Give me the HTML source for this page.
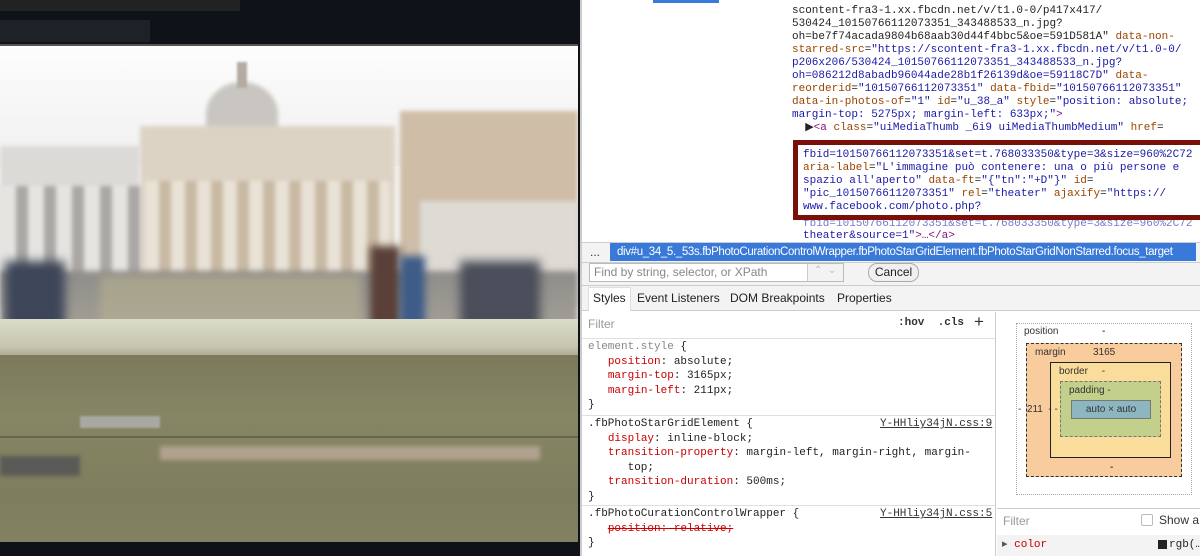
<!DOCTYPE html>
<html><head><meta charset="utf-8"><style>
*{margin:0;padding:0;box-sizing:border-box}
body{width:1200px;height:556px;overflow:hidden;position:relative;background:#fff;font-family:"Liberation Sans",sans-serif}
.a{position:absolute}
.m{font-family:"Liberation Mono",monospace;font-size:11px;white-space:pre;line-height:13px}
.n{color:#994500}.v{color:#1a1aa6}.t{color:#881280}
.s{font-family:"Liberation Mono",monospace;font-size:11px;white-space:pre;line-height:14.5px;color:#222}
.p{color:#c80000}
.sep{position:absolute;left:582px;width:413px;height:1px;background:#e0e0e0}
.tab{position:absolute;top:291px;font-size:12px;color:#222;white-space:nowrap}
</style></head><body>
<!-- left photo -->
<div class="a" style="left:0;top:0;width:580px;height:556px;background:#0f1319"></div>
<div class="a" style="left:0;top:0;width:240px;height:11px;background:#222"></div>
<div class="a" style="left:0;top:20px;width:150px;height:22px;background:#1e2126"></div>
<div class="a" style="left:0;top:44px;width:578px;height:2px;background:#555"></div>
<div class="a" style="left:0;top:46px;width:578px;height:496px;overflow:hidden;background:#f8f8f8">
  <div class="a" style="left:0;top:0;width:578px;height:120px;background:linear-gradient(#fdfdfd,#f0f0f0)"></div>
  <div class="a" style="left:206px;top:36px;width:72px;height:64px;border-radius:50% 50% 0 0;background:#c9c6c2;filter:blur(2px)"></div>
  <div class="a" style="left:237px;top:16px;width:10px;height:26px;background:#b4aca2;filter:blur(1px)"></div>
  <div class="a" style="left:140px;top:80px;width:255px;height:170px;background:#ddd3c4;filter:blur(2px)"></div>
  <div class="a" style="left:145px;top:135px;width:245px;height:100px;background:repeating-linear-gradient(90deg,#e9e2d6 0 14px,#c8b9a3 14px 26px);filter:blur(2px)"></div>
  <div class="a" style="left:0;top:100px;width:140px;height:160px;background:#dcdad7;filter:blur(2px)"></div>
  <div class="a" style="left:0;top:140px;width:140px;height:100px;background:repeating-linear-gradient(90deg,#e6e4e1 0 16px,#aaa7a4 16px 28px);filter:blur(2px)"></div>
  <div class="a" style="left:400px;top:65px;width:178px;height:195px;background:#cfbda8;filter:blur(2px)"></div>
  <div class="a" style="left:420px;top:155px;width:158px;height:100px;background:#dedad4;filter:blur(2px)"></div>
  <div class="a" style="left:0;top:225px;width:578px;height:90px;background:linear-gradient(#8f8d89,#aeaaa0);filter:blur(3px)"></div>
  <div class="a" style="left:100px;top:230px;width:260px;height:80px;background:#b5b08f;opacity:.6;filter:blur(4px)"></div>
  <div class="a" style="left:370px;top:200px;width:30px;height:110px;background:#5a4038;filter:blur(4px)"></div>
  <div class="a" style="left:400px;top:210px;width:25px;height:100px;background:#3d5c88;filter:blur(4px)"></div>
  <div class="a" style="left:5px;top:215px;width:60px;height:95px;background:#3d4658;filter:blur(5px)"></div>
  <div class="a" style="left:460px;top:215px;width:80px;height:95px;background:#4a4e5a;filter:blur(5px)"></div>
  <div class="a" style="left:0;top:273px;width:578px;height:40px;background:linear-gradient(#dcdccb,#c6c4ae 70%,#a69c87)"></div>
  <div class="a" style="left:0;top:309px;width:578px;height:200px;background:linear-gradient(#7b7a5c,#868664 30%,#7e7e5e 70%,#838363)"></div>
  <div class="a" style="left:80px;top:370px;width:80px;height:12px;background:#a8a8a2;filter:blur(1px)"></div>
  <div class="a" style="left:160px;top:400px;width:380px;height:14px;background:#b0a28e;filter:blur(2px)"></div>
  <div class="a" style="left:0;top:390px;width:578px;height:2px;background:#4a4533;opacity:.5"></div>
  <div class="a" style="left:0;top:410px;width:80px;height:20px;background:#5a5a58;filter:blur(2px)"></div>
</div>
<!-- devtools -->
<div class="a" style="left:580px;top:0;width:620px;height:556px;background:#fff;border-left:2px solid #ccc"></div>
<div class="a" style="left:653px;top:0;width:66px;height:3px;background:#3879d9"></div>
<div class="a m" style="left:792px;top:5px;color:#222">scontent-fra3-1.xx.fbcdn.net/v/t1.0-0/p417x417/
530424_10150766112073351_343488533_n.jpg?
oh=be7f74acada9804b68aab30d44f4bbc5&amp;oe=591D581A" <span class="n">data-non-</span>
<span class="n">starred-src</span>=<span class="v">"https://scontent-fra3-1.xx.fbcdn.net/v/t1.0-0/</span>
<span class="v">p206x206/530424_10150766112073351_343488533_n.jpg?</span>
<span class="v">oh=086212d8abadb96044ade28b1f26139d&amp;oe=59118C7D"</span> <span class="n">data-</span>
<span class="n">reorderid</span>=<span class="v">"10150766112073351"</span> <span class="n">data-fbid</span>=<span class="v">"10150766112073351"</span>
<span class="n">data-in-photos-of</span>=<span class="v">"1"</span> <span class="n">id</span>=<span class="v">"u_38_a"</span> <span class="n">style</span>=<span class="v">"position: absolute;</span>
<span class="v">margin-top: 5275px; margin-left: 633px;"</span><span class="t">&gt;</span>
  ▶<span class="t">&lt;a</span> <span class="n">class</span>=<span class="v">"uiMediaThumb _6i9 uiMediaThumbMedium"</span> <span class="n">href</span>=
</div>
<div class="a m" style="left:803px;top:218px;color:#1a1aa6;opacity:.6">fbid=10150766112073351&amp;set=t.768033350&amp;type=3&amp;size=960%2C72</div>
<div class="a m" style="left:803px;top:230px"><span class="v">theater&amp;source=1"</span><span class="t">&gt;…&lt;/a&gt;</span></div>
<div class="a" style="left:793px;top:140px;width:407px;height:80px;border:5px solid #7a0f0a;border-right:none;background:#fff"></div>
<div class="a m" style="left:803px;top:149px;color:#222"><span class="v">fbid=10150766112073351&amp;set=t.768033350&amp;type=3&amp;size=960%2C72</span>
<span class="n">aria-label</span>=<span class="v">"L'immagine può contenere: una o più persone e</span>
<span class="v">spazio all'aperto"</span> <span class="n">data-ft</span>=<span class="v">"{"tn":"+D"}"</span> <span class="n">id</span>=
<span class="v">"pic_10150766112073351"</span> <span class="n">rel</span>=<span class="v">"theater"</span> <span class="n">ajaxify</span>=<span class="v">"https://</span>
<span class="v">www.facebook.com/photo.php?</span></div>
<!-- breadcrumb -->
<div class="a" style="left:582px;top:242px;width:618px;height:20px;background:#f3f3f3;border-top:1px solid #ccc"></div>
<div class="a" style="left:590px;top:245px;font-size:12px;color:#333">...</div>
<div class="a" style="left:610px;top:243px;width:586px;height:18px;background:#3879d9;color:#fff;font-size:11.5px;line-height:18px;padding-left:7px;white-space:nowrap;letter-spacing:-0.35px;overflow:hidden">div#u_34_5._53s.fbPhotoCurationControlWrapper.fbPhotoStarGridElement.fbPhotoStarGridNonStarred.focus_target</div>
<!-- search -->
<div class="a" style="left:582px;top:262px;width:618px;height:24px;background:#f3f3f3;border-top:1px solid #ccc;border-bottom:1px solid #ccc"></div>
<div class="a" style="left:589px;top:263px;width:255px;height:19px;background:#fff;border:1px solid #bbb"></div>
<div class="a" style="left:594px;top:265px;font-size:12px;color:#888">Find by string, selector, or XPath</div>
<div class="a" style="left:807px;top:264px;width:36px;height:17px;background:#f3f3f3;border-left:1px solid #ccc"></div>
<div class="a" style="left:814px;top:265px;font-size:10px;color:#bbb">⌃&nbsp; ⌄</div>
<div class="a" style="left:868px;top:263px;width:51px;height:19px;border:1px solid #aaa;border-radius:9px;background:#f0f0f0;font-size:12px;text-align:center;line-height:17px;color:#222">Cancel</div>
<!-- tabs -->
<div class="a" style="left:582px;top:286px;width:618px;height:25px;background:#f3f3f3;border-bottom:1px solid #ccc"></div>
<div class="a" style="left:588px;top:287px;width:43px;height:24px;background:#fff;border:1px solid #ddd;border-bottom:none"></div>
<div class="tab" style="left:593px">Styles</div>
<div class="tab" style="left:637px">Event Listeners</div>
<div class="tab" style="left:730px">DOM Breakpoints</div>
<div class="tab" style="left:837px">Properties</div>
<!-- styles -->
<div class="a" style="left:995px;top:312px;width:1px;height:244px;background:#ccc"></div>
<div class="a" style="left:588px;top:317px;font-size:12px;color:#999">Filter</div>
<div class="a" style="left:898px;top:317px;font-family:'Liberation Mono',monospace;font-size:11px;font-weight:bold;color:#333">:hov&nbsp; .cls</div>
<div class="a" style="left:974px;top:312px;font-size:17px;color:#333">+</div>
<div class="sep" style="top:338px"></div>
<div class="sep" style="top:415px"></div>
<div class="sep" style="top:505px"></div>
<div class="a s" style="left:588px;top:340px"><span style="color:#888">element.style</span> {
   <span class="p">position</span>: absolute;
   <span class="p">margin-top</span>: 3165px;
   <span class="p">margin-left</span>: 211px;
}</div>
<div class="a s" style="left:588px;top:417px">.fbPhotoStarGridElement {
   <span class="p">display</span>: inline-block;
   <span class="p">transition-property</span>: margin-left, margin-right, margin-
      top;
   <span class="p">transition-duration</span>: 500ms;
}</div>
<div class="a s" style="left:880px;top:417px;text-decoration:underline;color:#333">Y-HHliy34jN.css:9</div>
<div class="a s" style="left:588px;top:507px">.fbPhotoCurationControlWrapper {
   <span class="p" style="text-decoration:line-through">position: relative;</span>
}</div>
<div class="a s" style="left:880px;top:507px;text-decoration:underline;color:#333">Y-HHliy34jN.css:5</div>
<!-- box model -->
<div class="a" style="left:1016px;top:323px;width:176px;height:172px;border:1px dotted #aaa"></div>
<div class="a" style="left:1024px;top:326px;font-size:10px;color:#333">position</div>
<div class="a" style="left:1102px;top:326px;font-size:10px">-</div>
<div class="a" style="left:1026px;top:343px;width:156px;height:134px;background:#f9cc9d;border:1px dashed #333"></div>
<div class="a" style="left:1035px;top:347px;font-size:10px;color:#333">margin</div>
<div class="a" style="left:1093px;top:347px;font-size:10px;color:#333">3165</div>
<div class="a" style="left:1050px;top:362px;width:121px;height:96px;background:#fbdd9b;border:1px solid #222"></div>
<div class="a" style="left:1059px;top:366px;font-size:10px;color:#333">border&nbsp;&nbsp;&nbsp;&nbsp;&nbsp;-</div>
<div class="a" style="left:1060px;top:381px;width:101px;height:56px;background:#c3d08b;border:1px dashed #777"></div>
<div class="a" style="left:1069px;top:385px;font-size:10px;color:#333">padding -</div>
<div class="a" style="left:1071px;top:400px;width:80px;height:19px;background:#8cb6c0;border:1px solid #777;font-size:10px;text-align:center;line-height:17px;color:#333">auto × auto</div>
<div class="a" style="left:1018px;top:404px;font-size:10px;color:#333">-&nbsp; 211&nbsp; - -</div>
<div class="a" style="left:1110px;top:462px;font-size:10px">-</div>
<div class="a" style="left:997px;top:508px;width:203px;height:1px;background:#ccc"></div>
<div class="a" style="left:1003px;top:514px;font-size:12px;color:#999">Filter</div>
<div class="a" style="left:1141px;top:514px;width:12px;height:12px;border:1px solid #bbb;border-radius:2px"></div>
<div class="a" style="left:1159px;top:513px;font-size:12px;color:#333;white-space:nowrap">Show a</div>
<div class="a" style="left:997px;top:535px;width:203px;height:21px;background:#f3f3f3"></div>
<div class="a s" style="left:1002px;top:538px;color:#555">▸ <span class="p">color</span></div>
<div class="a" style="left:1158px;top:540px;width:9px;height:9px;background:#222"></div>
<div class="a s" style="left:1169px;top:538px">rgb(…</div>
</body></html>
